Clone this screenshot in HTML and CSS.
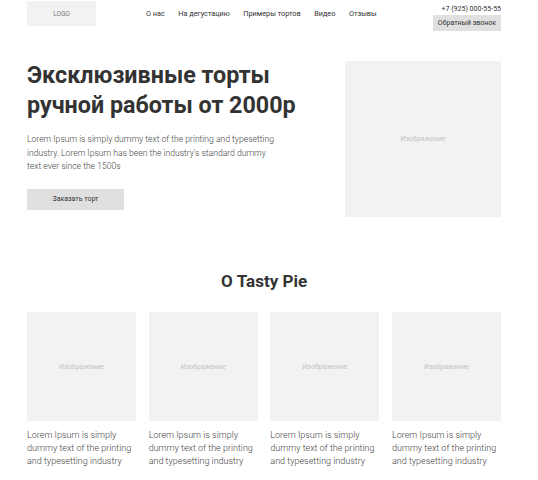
FILE: index.html
```html
<!DOCTYPE html>
<html lang="ru">
<head>
<meta charset="utf-8">
<title>Tasty Pie</title>
<link rel="stylesheet" href="styles.css">
</head>
<body>
<div class="page">
  <header class="header">
    <div class="logo">LOGO</div>
    <nav class="nav">
      <a href="#">О нас</a>
      <a href="#">На дегустацию</a>
      <a href="#">Примеры тортов</a>
      <a href="#">Видео</a>
      <a href="#">Отзывы</a>
    </nav>
    <div class="contact">
      <div class="phone">+7 (925) 000-55-55</div>
      <button class="callback">Обратный звонок</button>
    </div>
  </header>

  <section class="hero">
    <div class="hero-text">
      <h1>Эксклюзивные торты ручной работы от 2000р</h1>
      <p>Lorem Ipsum is simply dummy text of the printing and typesetting industry. Lorem Ipsum has been the industry's standard dummy text ever since the 1500s</p>
      <button class="order">Заказать торт</button>
    </div>
    <div class="placeholder hero-image">Изображение</div>
  </section>

  <section class="about">
    <h2>О Tasty Pie</h2>
    <div class="cards">
      <div class="card">
        <div class="placeholder card-image">Изображение</div>
        <p>Lorem Ipsum is simply dummy text of the printing and typesetting industry</p>
      </div>
      <div class="card">
        <div class="placeholder card-image">Изображение</div>
        <p>Lorem Ipsum is simply dummy text of the printing and typesetting industry</p>
      </div>
      <div class="card">
        <div class="placeholder card-image">Изображение</div>
        <p>Lorem Ipsum is simply dummy text of the printing and typesetting industry</p>
      </div>
      <div class="card">
        <div class="placeholder card-image">Изображение</div>
        <p>Lorem Ipsum is simply dummy text of the printing and typesetting industry</p>
      </div>
    </div>
  </section>
</div>
</body>
</html>
```

FILE: styles.css
```css
* { box-sizing: border-box; }

body {
  margin: 0;
  background: #fff;
  font-family: Roboto, "Liberation Sans", sans-serif;
  color: #333;
}

.page {
  width: 474px;
  margin-left: 27px;
}

/* header */
.header {
  display: flex;
  align-items: flex-start;
  padding-top: 1px;
}

.logo {
  width: 69px;
  height: 25px;
  background: #f2f2f2;
  color: #777;
  font-size: 6.5px;
  display: flex;
  align-items: center;
  justify-content: center;
}

.nav {
  display: flex;
  gap: 13.5px;
  margin-left: 50px;
  padding-top: 8px;
}

.nav a {
  font-size: 7.3px;
  color: #333;
  text-decoration: none;
}

.contact {
  margin-left: auto;
  display: flex;
  flex-direction: column;
  align-items: flex-end;
}

.phone {
  font-size: 7px;
  color: #333;
  line-height: 12px;
  margin-top: 2px;
}

.callback {
  border: 0;
  background: #e0e0e0;
  font-family: inherit;
  font-size: 7px;
  color: #333;
  width: 68px;
  height: 16px;
  padding: 0;
}

/* hero */
.hero {
  display: flex;
  justify-content: space-between;
  margin-top: 29px;
}

.hero-text {
  width: 290px;
}

.hero h1 {
  margin: 0;
  font-size: 23.3px;
  line-height: 30px;
  font-weight: 700;
  color: #333;
}

.hero p {
  margin: 13px 0 0;
  font-size: 8.6px;
  line-height: 13.5px;
  font-weight: 300;
  color: #444;
  width: 252px;
}

.order {
  margin-top: 15px;
  border: 0;
  background: #e0e0e0;
  width: 97px;
  height: 21px;
  padding: 0;
  font-family: inherit;
  font-size: 7px;
  color: #333;
}

.placeholder {
  background: #f2f2f2;
  color: #c4c4c4;
  font-size: 7px;
  display: flex;
  align-items: center;
  justify-content: center;
}

.hero-image {
  width: 156px;
  height: 156px;
  margin-top: 1px;
}

/* about */
.about {
  margin-top: 52px;
}

.about h2 {
  margin: 0;
  text-align: center;
  font-size: 17px;
  line-height: 24px;
  font-weight: 700;
  color: #333;
}

.cards {
  display: grid;
  grid-template-columns: repeat(4, 109px);
  justify-content: space-between;
  margin-top: 19px;
}

.card-image {
  width: 109px;
  height: 109px;
}

.card p {
  margin: 8px 0 0;
  font-size: 9px;
  line-height: 13px;
  font-weight: 300;
  color: #444;
}
```
